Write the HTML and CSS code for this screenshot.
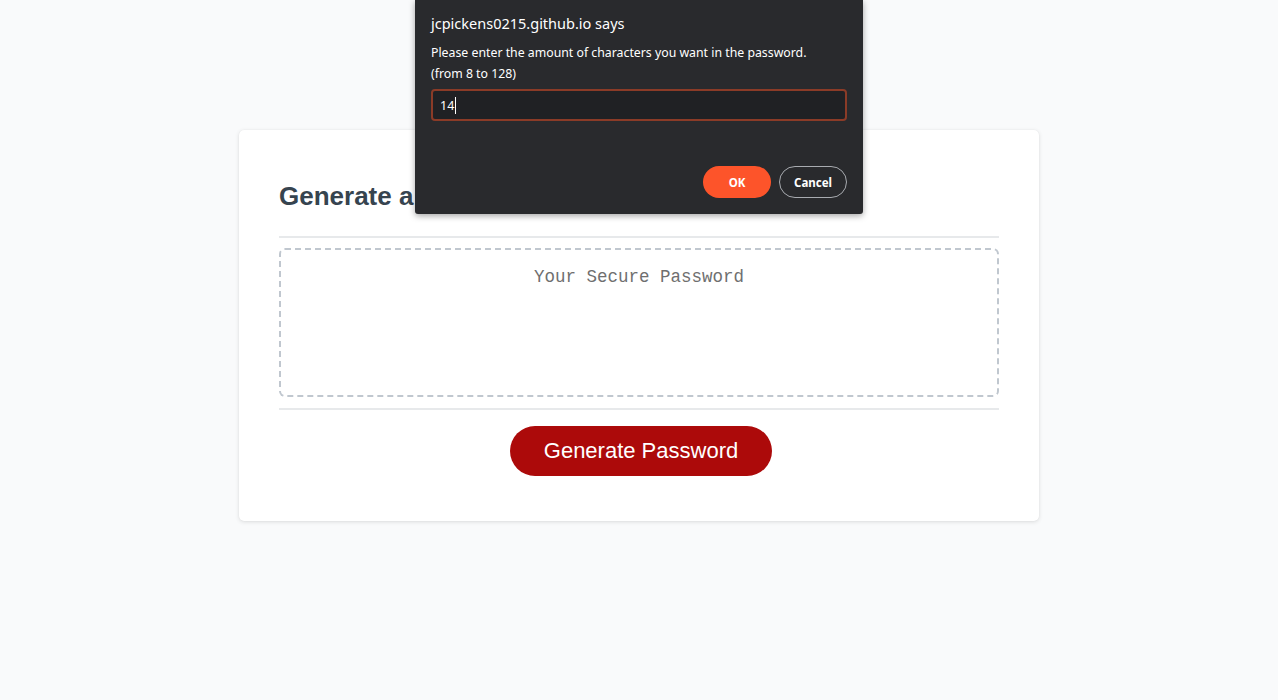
FILE: index.html
```html
<!DOCTYPE html>
<html lang="en">
<head>
<meta charset="UTF-8">
<title>Password Generator</title>
<link rel="stylesheet" href="styles.css">
</head>
<body>
  <div class="wrapper">
    <div class="card">
      <div class="card-header">
        <h2>Generate a Password</h2>
      </div>
      <div class="card-body">
        <textarea readonly id="password" placeholder="Your Secure Password" aria-label="Generated Password"></textarea>
      </div>
      <div class="card-footer">
        <button class="btn">Generate Password</button>
      </div>
    </div>
  </div>

  <div class="dialog">
    <div class="dialog-title">jcpickens0215.github.io says</div>
    <div class="dialog-msg">Please enter the amount of characters you want in the password.<br>(from 8 to 128)</div>
    <div class="dialog-input"><span>14</span><span class="caret"></span></div>
    <div class="dialog-actions">
      <button class="d-btn d-ok">OK</button>
      <button class="d-btn d-cancel">Cancel</button>
    </div>
  </div>
</body>
</html>
```

FILE: styles.css
```css
* { box-sizing: border-box; }
html, body { height: 100%; }
body {
  margin: 0;
  background: #f9fafb;
  font-family: "Liberation Sans", Arial, sans-serif;
}
.wrapper {
  padding-top: 130px;
  display: flex;
  justify-content: center;
}
.card {
  width: 800px;
  background: #fff;
  border-radius: 5px;
  box-shadow: 0 1px 4px rgba(0,0,0,0.12), 0 0 1px rgba(0,0,0,0.08);
  padding: 0 40px 45px;
}
.card-header {
  padding: 51px 0 25px;
  border-bottom: 2px solid #e7e9eb;
}
.card-header h2 {
  margin: 0;
  font-size: 26px;
  line-height: 30px;
  font-weight: bold;
  color: #36444f;
}
.card-body {
  padding: 10px 0 11px;
}
.card-body textarea {
  display: block;
  width: 100%;
  height: 149px;
  border: 2px dashed #c0c7cf;
  border-radius: 6px;
  resize: none;
  outline: none;
  padding: 17px 10px;
  text-align: center;
  font-family: "Liberation Mono", "DejaVu Sans Mono", monospace;
  font-size: 17.5px;
  color: #333;
  background: #fff;
}
.card-body textarea::placeholder { color: #6f6f6f; }
.card-footer {
  border-top: 2px solid #e7e9eb;
  padding: 16px 0 0 4px;
  display: flex;
  justify-content: center;
}
.btn {
  width: 262px;
  height: 50px;
  border: none;
  border-radius: 25px;
  background: #ac0a0a;
  color: #fff;
  font-family: "Liberation Sans", Arial, sans-serif;
  font-size: 22px;
  cursor: pointer;
}

.dialog {
  position: absolute;
  top: 0;
  left: 415px;
  width: 448px;
  height: 214px;
  background: #292a2d;
  border-radius: 0 0 3px 3px;
  box-shadow: 0 2px 6px rgba(0,0,0,0.35);
  padding: 13px 16px 16px;
  font-family: "Noto Sans", "Open Sans", sans-serif;
  color: #e8eaed;
  display: flex;
  flex-direction: column;
}
.dialog-title {
  font-size: 14.5px;
  line-height: 20px;
  color: #fff;
}
.dialog-msg {
  margin-top: 9px;
  font-size: 12.3px;
  line-height: 21px;
  color: #fff;
}
.dialog-input {
  margin-top: 5px;
  height: 32px;
  border: 2px solid #8b3b27;
  border-radius: 4px;
  background: #202124;
  display: flex;
  align-items: center;
  padding-left: 7px;
  font-size: 12.5px;
  color: #fff;
}
.caret {
  display: inline-block;
  width: 1px;
  height: 17px;
  background: #fff;
  margin-left: 1px;
}
.dialog-actions {
  margin-top: auto;
  display: flex;
  justify-content: flex-end;
  gap: 8px;
}
.d-btn {
  width: 68px;
  height: 32px;
  border-radius: 16px;
  font-family: "Noto Sans", "Open Sans", sans-serif;
  font-size: 11.5px;
  font-weight: bold;
  color: #fff;
  cursor: pointer;
}
.d-ok {
  background: #fd542a;
  border: none;
}
.d-cancel {
  background: transparent;
  border: 1px solid #a8abb0;
}
```
